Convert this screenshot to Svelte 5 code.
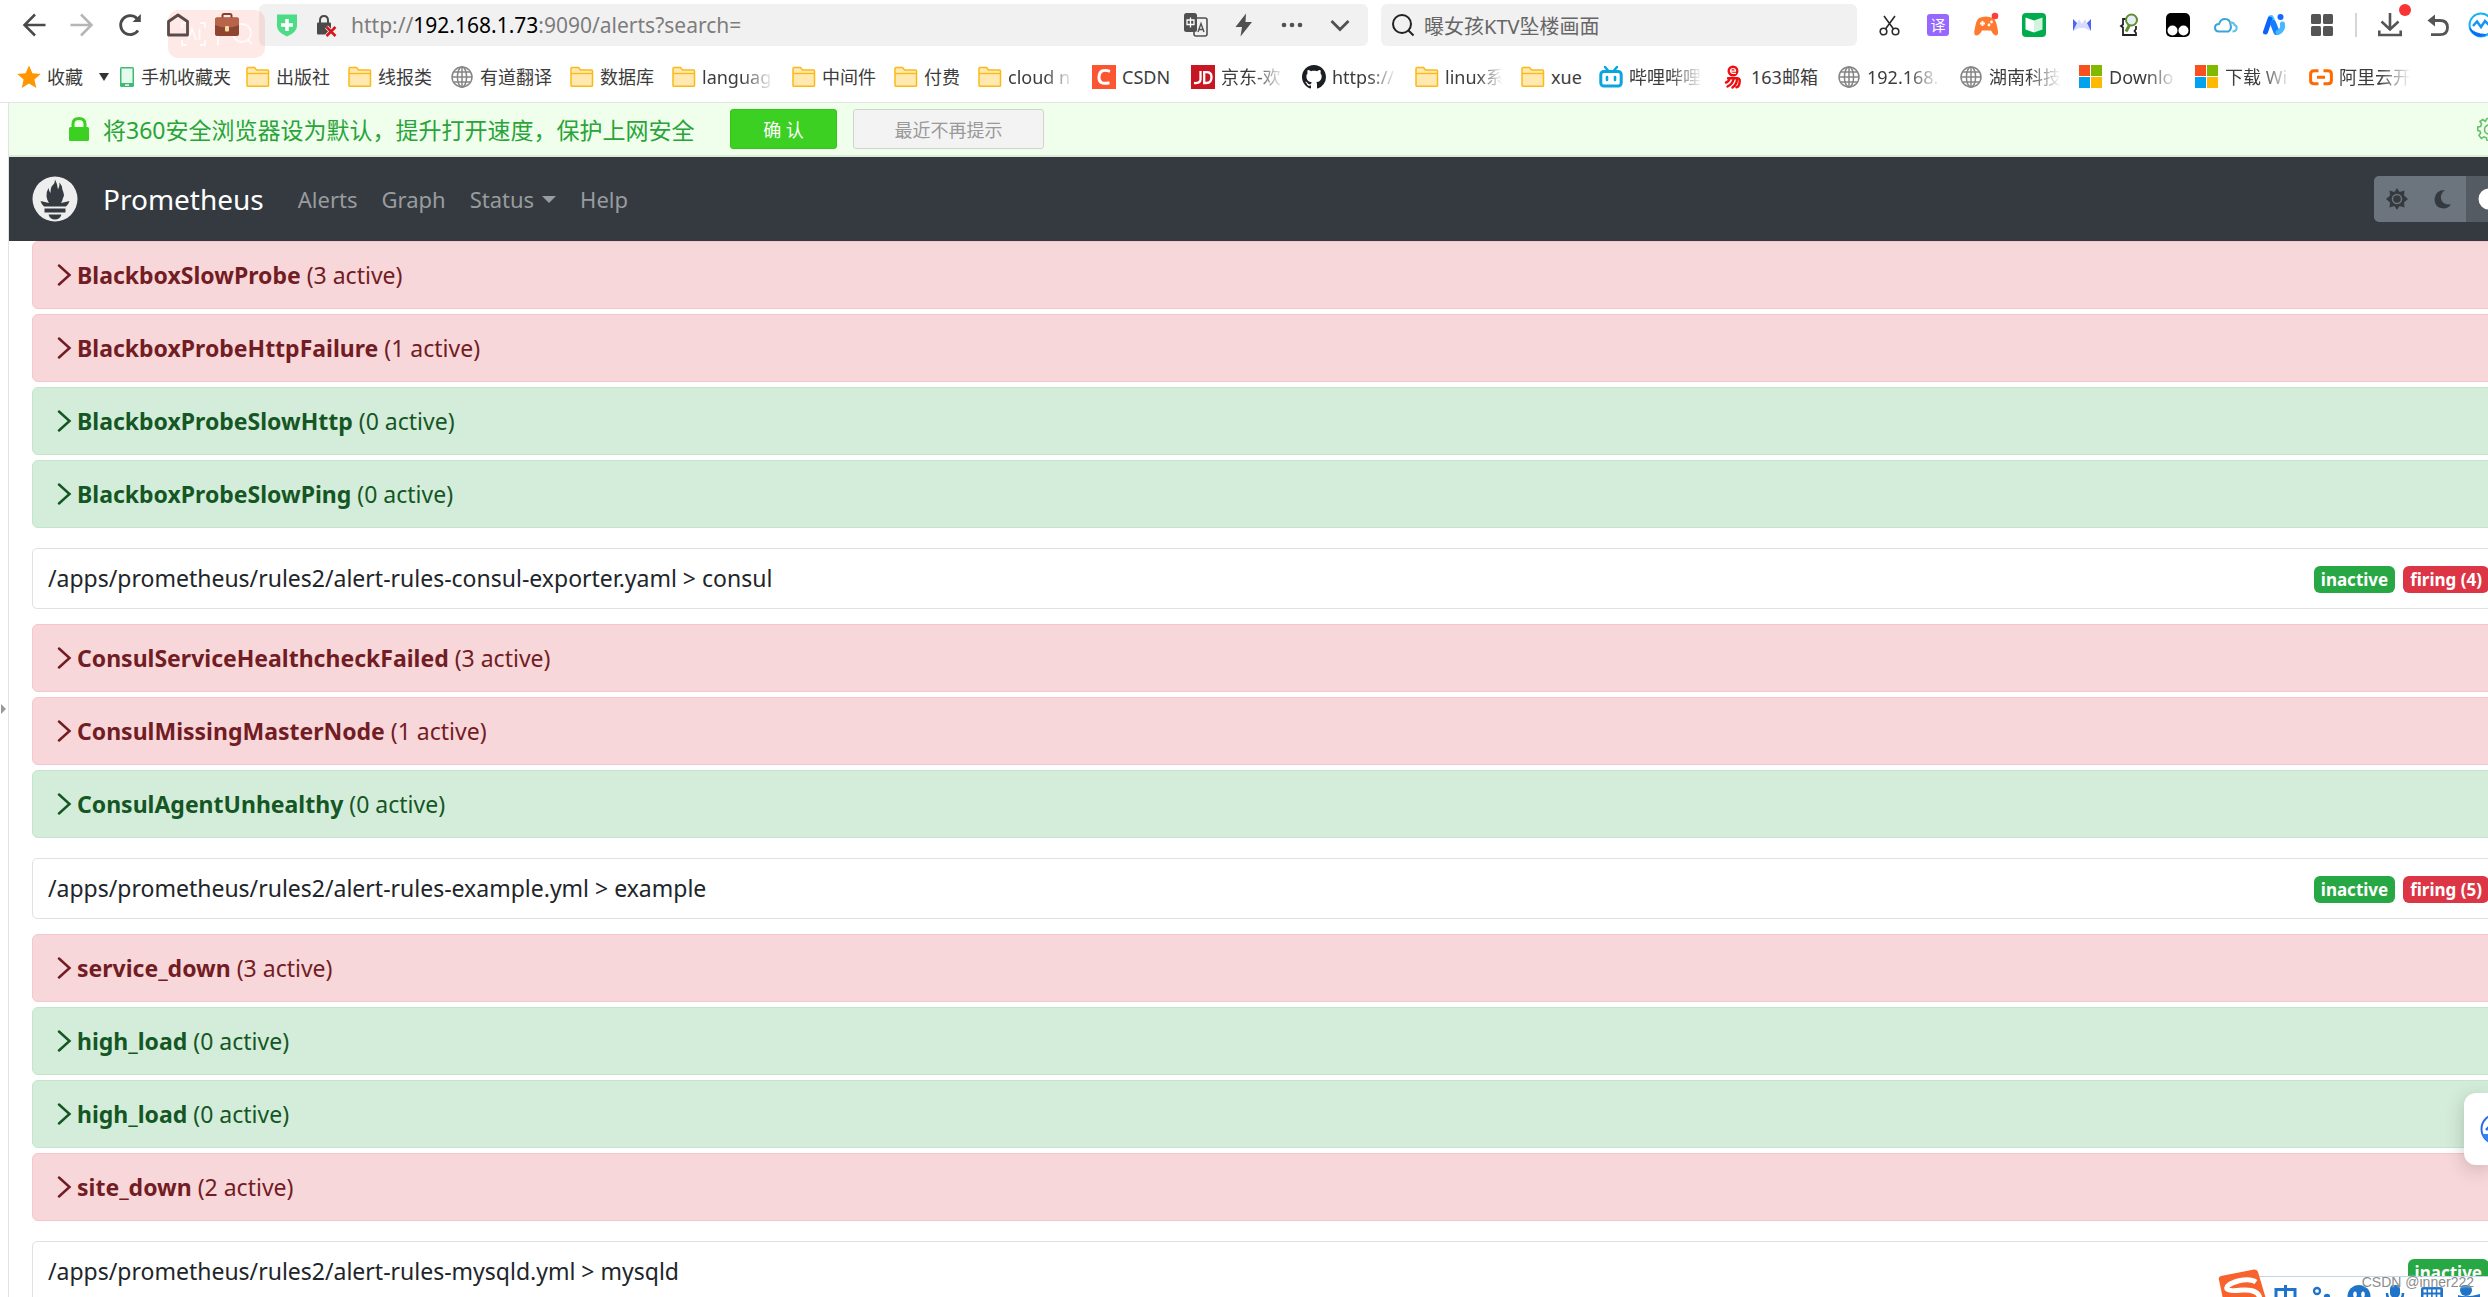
<script>
  const bookmarks = [
    { icon: 'phone', label: '手机收藏夹', w: 87 },
    { icon: 'folder', label: '出版社', w: 54 },
    { icon: 'folder', label: '线报类', w: 54 },
    { icon: 'globe', label: '有道翻译', w: 72 },
    { icon: 'folder', label: '数据库', w: 54 },
    { icon: 'folder', label: 'languag', w: 72, fade: true },
    { icon: 'folder', label: '中间件', w: 54 },
    { icon: 'folder', label: '付费', w: 36 },
    { icon: 'folder', label: 'cloud n', w: 66, fade: true },
    { icon: 'csdn', label: 'CSDN', w: 51 },
    { icon: 'jd', label: '京东-欢', w: 63, fade: true },
    { icon: 'github', label: 'https://', w: 65, fade: true },
    { icon: 'folder', label: 'linux系', w: 58, fade: true },
    { icon: 'folder', label: 'xue', w: 30 },
    { icon: 'bili', label: '哔哩哔哩', w: 74, fade: true },
    { icon: 'netease', label: '163邮箱', w: 68 },
    { icon: 'globe', label: '192.168.', w: 74, fade: true },
    { icon: 'globe', label: '湖南科技', w: 72, fade: true },
    { icon: 'ms', label: 'Downlo', w: 68, fade: true },
    { icon: 'ms', label: '下载 Wi', w: 66, fade: true },
    { icon: 'aliyun', label: '阿里云开', w: 72, fade: true }
  ];

  const extensions = ['scissors', 'translate', 'gamepad', 'book', 'bow', 'lens', 'monkey', 'cloud', 'ai', 'grid'];

  const groups = [
    {
      file: null,
      alerts: [
        { name: 'BlackboxSlowProbe', n: 3 },
        { name: 'BlackboxProbeHttpFailure', n: 1 },
        { name: 'BlackboxProbeSlowHttp', n: 0 },
        { name: 'BlackboxProbeSlowPing', n: 0 }
      ]
    },
    {
      file: '/apps/prometheus/rules2/alert-rules-consul-exporter.yaml > consul',
      firing: 4,
      alerts: [
        { name: 'ConsulServiceHealthcheckFailed', n: 3 },
        { name: 'ConsulMissingMasterNode', n: 1 },
        { name: 'ConsulAgentUnhealthy', n: 0 }
      ]
    },
    {
      file: '/apps/prometheus/rules2/alert-rules-example.yml > example',
      firing: 5,
      alerts: [
        { name: 'service_down', n: 3 },
        { name: 'high_load', n: 0 },
        { name: 'high_load', n: 0 },
        { name: 'site_down', n: 2 }
      ]
    },
    { file: '/apps/prometheus/rules2/alert-rules-mysqld.yml > mysqld', firing: 0, alerts: [] }
  ];
</script>

{#snippet bookmarkIcon(kind)}
  {#if kind === 'phone'}
    <svg class="phone" width="16" height="24" viewBox="0 0 16 24"><rect x="1" y="2" width="14" height="20" rx="1.5" fill="#3dbb72" /><rect x="2.5" y="3.5" width="11" height="14.5" fill="#e4fbee" /><rect x="6" y="19.4" width="4" height="1.4" fill="#fff" /></svg>
  {:else if kind === 'folder'}
    <svg width="24" height="24" viewBox="0 0 24 24"><path d="M1 3.5Q1 2.5 2 2.5H8.500L10.500 5H21.500Q22.500 5 22.500 6V20.500Q22.500 21.300 21.500 21.300H2Q1 21.300 1 20.500Z" fill="#ffe9b0" stroke="#fbb917" stroke-width="1.5" /><path d="M1 8.500H22.500" stroke="#fbb917" stroke-width="1.3" /></svg>
  {:else if kind === 'globe'}
    <svg width="24" height="24" viewBox="0 0 24 24" fill="none" stroke="#858585" stroke-width="1.5"><circle cx="12" cy="12" r="10" /><ellipse cx="12" cy="12" rx="4.600" ry="10" /><path d="M2 12H22M12 2V22M3.800 7H20.200M3.800 17H20.200" /></svg>
  {:else if kind === 'csdn'}
    <svg width="24" height="24" viewBox="0 0 24 24"><rect width="24" height="24" fill="#fc5531" /><path d="M18 6.300Q8 3 7 11.500Q6.300 20.500 17.500 17.700" fill="none" stroke="#fff" stroke-width="3" /></svg>
  {:else if kind === 'jd'}
    <svg width="24" height="24" viewBox="0 0 24 24" fill="none" stroke="#fff" stroke-width="2.300"><rect width="24" height="24" fill="#c91623" stroke="none" /><path d="M9.500 6V14.500Q9.500 18.500 3 18" /><path d="M13.200 7.200H15.500Q20.500 7.200 20.500 12Q20.500 18 15.500 18H13.200Z" /></svg>
  {:else if kind === 'github'}
    <svg width="24" height="24" viewBox="0 0 16 16"><path fill="#1b1f23" d="M8 0C3.580 0 0 3.580 0 8c0 3.540 2.290 6.530 5.470 7.590.4.070.55-.17.55-.38 0-.19-.01-.82-.01-1.490-2.010.37-2.530-.49-2.690-.94-.09-.23-.48-.94-.82-1.130-.28-.15-.68-.52-.01-.53.63-.01 1.080.58 1.230.82.72 1.210 1.870.87 2.330.66.07-.52.28-.87.51-1.070-1.780-.2-3.640-.89-3.640-3.950 0-.87.31-1.590.82-2.150-.08-.2-.36-1.020.08-2.120 0 0 .67-.21 2.200.82.64-.18 1.320-.27 2-.27s1.360.09 2 .27c1.530-1.040 2.200-.82 2.200-.82.44 1.100.16 1.920.08 2.120.51.56.82 1.270.82 2.150 0 3.070-1.870 3.750-3.650 3.950.29.25.54.73.54 1.480 0 1.070-.01 1.930-.01 2.200 0 .21.15.46.55.38A8.010 8.010 0 0 0 16 8c0-4.420-3.580-8-8-8z" /></svg>
  {:else if kind === 'bili'}
    <svg width="24" height="24" viewBox="0 0 24 24" fill="none" stroke="#0aa5e0" stroke-width="3" stroke-linecap="round"><rect x="1.800" y="6.500" width="20.400" height="14.500" rx="3" /><path d="M6 2L9 5.500M18 2L15 5.500" stroke-width="2.500" /><path d="M8 12V15M16 12V15" stroke-width="2.600" /></svg>
  {:else if kind === 'netease'}
    <svg width="24" height="24" viewBox="0 0 24 24" fill="none" stroke="#ee1010" stroke-width="2.400" stroke-linecap="round"><circle cx="12" cy="6" r="5.500" fill="#ee1010" stroke="none" /><path d="M9.500 6.200H14.500Q14.500 3.500 12 3.500Q9.500 3.500 9.500 6.200Q9.800 9 14.500 8.300" stroke="#fff" stroke-width="1.200" /><path d="M7 13.200H16.500Q19.500 13.200 18.500 18Q18 22 15.500 22.300M8.500 13.500Q8 16.500 5 17.500M12.500 14.500Q11.500 19 6.500 21.500M16 15Q15.500 19.500 11.500 22.500" /></svg>
  {:else if kind === 'ms'}
    <svg width="24" height="24" viewBox="0 0 24 24"><path fill="#f8501f" d="M0 0h11v11H0z" /><path fill="#80b900" d="M12 0h11v11H12z" /><path fill="#02a3ee" d="M0 12h11v11H0z" /><path fill="#ffb901" d="M12 12h11v11H12z" /></svg>
  {:else if kind === 'aliyun'}
    <svg width="24" height="24" viewBox="0 0 24 24" fill="none" stroke="#ff6a00" stroke-width="3"><path d="M9.500 5.800H5Q1.600 5.800 1.600 9V15.500Q1.600 18.700 5 18.700H9.500M14.500 5.800H19Q22.400 5.800 22.400 9V15.500Q22.400 18.700 19 18.700H14.500M8 12.300H16" /></svg>
  {/if}
{/snippet}

{#snippet extensionIcon(kind)}
  {#if kind === 'scissors'}
    <svg width="24" height="24" viewBox="0 0 24 24" fill="none" stroke="#2b2b2b" stroke-width="1.600"><circle cx="5.500" cy="18.500" r="3.300" /><circle cx="17.500" cy="18.500" r="3.300" /><path d="M6 3L15.500 16M17 3L7.500 16" /></svg>
  {:else if kind === 'translate'}
    <span class="yi">译</span>
  {:else if kind === 'gamepad'}
    <svg width="26" height="26" viewBox="0 0 26 26"><path d="M6 6Q13 3 20 6Q23 7 25 19Q25.500 23.500 22.500 23.500Q19.500 22 18 18.500H9Q6.500 23.500 3 23.500Q.5 23 1.500 18Q3.500 7 6 6Z" fill="#ff7a2e" /><path d="M7 11.500H12M9.500 9V14" stroke="#fff" stroke-width="1.800" /><circle cx="18.500" cy="10" r="1.400" fill="#fff" /><circle cx="16" cy="13" r="1.400" fill="#fff" /><circle cx="22" cy="4" r="3.300" fill="#ff3b3b" /></svg>
  {:else if kind === 'book'}
    <svg width="24" height="24" viewBox="0 0 24 24"><rect width="24" height="24" rx="4" fill="#00ad4c" /><path d="M3.500 4.500L12 7.500V19.500L3.500 16.500Z" fill="#fff" /><path d="M20.500 4.500L12 7.500V19.500L20.500 16.500Z" fill="#d3f3df" /></svg>
  {:else if kind === 'bow'}
    <svg width="24" height="24" viewBox="0 0 24 24"><path d="M3 18V6L9 12Z" fill="#4f63f4" /><path d="M21 18V6L15 12Z" fill="#4f63f4" /><path d="M3 18L9 6L12 11L15 6L21 18L14.500 15H9.500Z" fill="#d7dcff" /></svg>
  {:else if kind === 'lens'}
    <svg width="24" height="24" viewBox="0 0 24 24" fill="none"><path d="M8 6H5V11.500L3 13L5 14.500V22H18V20L16.500 18L18 16V13" stroke="#222" stroke-width="1.800" /><circle cx="13.500" cy="7" r="5.500" fill="#e3edf7" stroke="#5f8f2d" stroke-width="2" /><path d="M11.500 12L8 18.500" stroke="#5f8f2d" stroke-width="3" /></svg>
  {:else if kind === 'monkey'}
    <svg width="24" height="24" viewBox="0 0 24 24"><rect width="24" height="24" rx="5" fill="#000" /><circle cx="6.500" cy="17.500" r="5" fill="#fff" /><circle cx="17.500" cy="17.500" r="5" fill="#fff" /></svg>
  {:else if kind === 'cloud'}
    <svg width="26" height="24" viewBox="0 0 26 24" fill="none" stroke-width="2"><path d="M6 18.500Q2 18.500 2 14.500Q2 11 6 11Q7.500 6 12 6Q17 6 17.500 11.500Q19 16 15.500 18.500Z" stroke="#3aa6d8" /><path d="M17 9.500Q21 9 21.500 12Q24.500 13 23.500 16Q22.800 18.500 19.500 18.500" stroke="#5cc4ea" /></svg>
  {:else if kind === 'ai'}
    <svg width="26" height="24" viewBox="0 0 26 24" fill="none" stroke-width="6" stroke-linecap="round"><path d="M10 5L15.500 19" stroke="#3bd0f6" /><path d="M9 6L4.500 19" stroke="#0d62fe" stroke-width="5" /><path d="M12 10L15.500 19" stroke="#167dff" /><path d="M21.500 11Q22.500 17 17 19.500" stroke="#45b8ff" stroke-width="5" /><circle cx="19.500" cy="4" r="3" fill="#1268ff" /></svg>
  {:else if kind === 'grid'}
    <svg width="24" height="24" viewBox="0 0 24 24" fill="#555"><rect x="1" y="1" width="10" height="10" rx="1.500" /><rect x="13" y="1" width="10" height="10" rx="1.500" /><rect x="1" y="13" width="10" height="10" rx="1.500" /><rect x="13" y="13" width="10" height="10" rx="1.500" /></svg>
  {/if}
{/snippet}

<div class="browser">
  <div class="toolbar">
    <div class="nav-buttons">
      <button aria-label="Back"><svg width="24" height="24" viewBox="0 0 24 24" fill="none" stroke="#4a4a4a" stroke-width="2.500"><path d="M13 1.500L2.500 12L13 22.500M2.500 12H23.500" /></svg></button>
      <button aria-label="Forward"><svg width="24" height="24" viewBox="0 0 24 24" fill="none" stroke="#b5b5b5" stroke-width="2.500"><path d="M11 1.500L21.500 12L11 22.500M21.500 12H.5" /></svg></button>
      <button aria-label="Reload"><svg width="24" height="24" viewBox="0 0 24 24" fill="none" stroke="#4a4a4a" stroke-width="2.800"><path d="M20 17.500A9.500 9.500 0 1 1 19 5.500" /><path d="M22.800 1V9H14.500Z" fill="#4a4a4a" stroke="none" /></svg></button>
      <button aria-label="Home"><svg width="24" height="24" viewBox="0 0 24 24" fill="none" stroke="#5a4a4c" stroke-width="2.800" stroke-linejoin="round"><path d="M2.500 8.500L12 2L21.500 8.500V22H2.500Z" /></svg></button>
      <button aria-label="Toolbox"><svg width="26" height="24" viewBox="0 0 26 24"><path d="M8.500 5V2.500Q8.500 1 10 1H16Q17.500 1 17.500 2.500V5" fill="none" stroke="#8a3f2b" stroke-width="2" /><rect x="1" y="4.500" width="24" height="18.500" rx="2" fill="#8f4430" /><path d="M1 6.500Q1 4.500 3 4.500H23Q25 4.500 25 6.500V12Q19 14.500 13 14.500Q7 14.500 1 12Z" fill="#b7644a" /><rect x="11" y="13" width="4" height="5.500" rx="1" fill="#f6d9a0" /></svg></button>
    </div>
    <div class="address">
      <svg width="24" height="24" viewBox="0 0 24 24"><path d="M2 1.500H22V13Q22 19 12 23.500Q2 19 2 13Z" fill="#4ddc86" /><path d="M12 6V18M6 12H18" stroke="#fff" stroke-width="3.500" /></svg>
      <svg class="insecure" width="22" height="24" viewBox="0 0 22 24"><path d="M4 11V7.500Q4 3 8 3Q12 3 12 7.500V11" fill="none" stroke="#4a4a4a" stroke-width="2" /><rect x="1" y="9.500" width="14" height="12" rx="1" fill="#4a4a4a" /><path d="M10.500 14L19.500 23M19.500 14L10.500 23" stroke="#f1f1f1" stroke-width="4" /><path d="M10.500 14L19.500 23M19.500 14L10.500 23" stroke="#d9151c" stroke-width="2.500" /></svg>
      <span class="url">http://<b>192.168.1.73</b>:9090/alerts?search=</span>
      <div class="address-tools">
        <button aria-label="Translate page"><svg width="24" height="24" viewBox="0 0 24 24"><rect x="10" y="5" width="13" height="18" rx="2" fill="none" stroke="#505050" stroke-width="1.600" /><rect width="13" height="19" rx="2.500" fill="#505050" /><path d="M3 7H10V11.500H3ZM6.500 4.500V14.500" fill="none" stroke="#fff" stroke-width="1.300" /><path d="M14 19L17 10.500L20 19M15 16.500H19" fill="none" stroke="#505050" stroke-width="1.400" /></svg></button>
        <button aria-label="Speed mode"><svg width="24" height="24" viewBox="0 0 24 24"><path d="M14 .5L3.500 14H10L8.500 23.500L20 9H13.500Z" fill="#505050" /></svg></button>
        <button aria-label="More"><svg width="24" height="24" viewBox="0 0 24 24" fill="#505050"><circle cx="4" cy="12" r="2.300" /><circle cx="12" cy="12" r="2.300" /><circle cx="20" cy="12" r="2.300" /></svg></button>
        <button aria-label="History"><svg width="24" height="24" viewBox="0 0 24 24" fill="none" stroke="#505050" stroke-width="2.800"><path d="M3.500 8L12 16.500L20.500 8" /></svg></button>
      </div>
    </div>
    <label class="search">
      <svg width="24" height="24" viewBox="0 0 24 24" fill="none" stroke="#222" stroke-width="2"><circle cx="11" cy="11" r="9" /><path d="M17.500 17.500L22.500 22.500" /></svg>
      <input type="text" aria-label="Search" value="曝女孩KTV坠楼画面" />
    </label>
    <div class="extensions">
      {#each extensions as kind}
        <button aria-label={kind}>{@render extensionIcon(kind)}</button>
      {/each}
      <span class="separator"></span>
      <button class="download" aria-label="Downloads"><svg width="24" height="24" viewBox="0 0 24 24" fill="none" stroke="#555" stroke-width="2.600"><path d="M12 0V16M3.500 8.500L12 16.500L20.500 8.500M1.300 17.500V22H22.700V17.500" /></svg><i></i></button>
      <button aria-label="Undo"><svg width="24" height="24" viewBox="0 0 24 24" fill="none" stroke="#555" stroke-width="2.800"><path d="M6 7.500H14Q21.500 7.500 21.500 14.500Q21.500 21.700 14 21.700H5" /><path d="M9 1.500V13.500L1.500 7.500Z" fill="#555" stroke="none" /></svg></button>
      <button class="assistant" aria-label="Assistant"><svg width="26" height="26" viewBox="0 0 26 26" fill="none"><circle cx="13" cy="13" r="11.500" stroke="#12b4f7" stroke-width="2" /><path d="M2 16Q6 22 18 22.500Q14 25 10 24A12 12 0 0 1 2 16Z" fill="#0a6cf5" stroke="#0a6cf5" stroke-width="1" /><path d="M5 14L9 9.500L13 15L17 9L22 14" stroke="#1595f5" stroke-width="2.500" /></svg></button>
    </div>
    <div class="capture">
      <svg width="72" height="24" viewBox="0 0 72 24" fill="none" stroke="#fff" stroke-opacity="0.8" stroke-width="1.800"><path d="M6 1H1V6M19 1H24V6M6 23H1V18M19 23H24V18M7 18L11 7L15 18M18.500 7V18M37 1V23" /><circle cx="61" cy="11" r="9" /><path d="M67 18L71 22" /></svg>
    </div>
  </div>

  <nav class="bookmarks" aria-label="Bookmarks">
    <a class="favourites" href="#favourites">
      <svg width="24" height="24" viewBox="0 0 24 24"><path d="M12 .5L15.400 8.300L23.700 9L17.400 14.600L19.300 23L12 18.600L4.700 23L6.600 14.600L.3 9L8.600 8.300Z" fill="#ff9500" /></svg>
      <span>收藏</span>
      <svg class="caret-down" width="10" height="8" viewBox="0 0 10 8"><path d="M0 0H10L5 8Z" fill="#333" /></svg>
    </a>
    {#each bookmarks as b}
      <a href="#bookmark">
        {@render bookmarkIcon(b.icon)}
        <span class:fade={b.fade} style:width="{b.w}px">{b.label}</span>
      </a>
    {/each}
  </nav>

  <div class="viewport">
    <div class="gutter">
      <svg width="6" height="10" viewBox="0 0 6 10"><path d="M1 0L6 5L1 10Z" fill="#999" /></svg>
    </div>
    <main>
      <div class="notice">
        <svg width="22" height="26" viewBox="0 0 22 26"><path d="M5 12V8Q5 2.500 11 2.500Q17 2.500 17 8V12" fill="none" stroke="#3bd022" stroke-width="3" /><rect x="1" y="11" width="20" height="14" rx="1.500" fill="#3bd022" /></svg>
        <span>将360安全浏览器设为默认，提升打开速度，保护上网安全</span>
        <button class="confirm">确 认</button>
        <button class="dismiss">最近不再提示</button>
        <svg class="gear" width="24" height="24" viewBox="0 0 24 24" fill="none" stroke="#66bf6b" stroke-width="1.600"><path d="M10 1.500H14L14.600 4.600L17 5.600L19.600 3.800L22 6.500L20.300 9L21 11H23V14.500L20.300 15L19.300 17.400L21 20L18 22L15.500 20.300L14 21V23.500H10L9.400 20.800L7 19.800L4.400 21.500L2 18.500L3.700 16L2.800 14L.8 13.500V10L3.500 9.500L4.600 7L3 4.500L5.800 2.500L8.300 4.400Z" /><circle cx="12" cy="12.500" r="4.500" /></svg>
      </div>

      <nav class="navbar" aria-label="Prometheus">
        <a class="brand" href="#home">
          <svg width="46" height="46" viewBox="0 0 46 46"><circle cx="23" cy="23" r="22.500" fill="#eee" /><g fill="#343a40"><path d="M23 3.500Q25.500 8 26 13.500Q28 10 27.500 6.500Q30 9 30.500 14Q33 19 31 22Q30.500 24.500 29 27L37.500 25Q36.500 28.500 34 30.500H12Q9.500 28.500 8.500 25L17 27Q15 24 14.500 20.500Q14 16 16.500 12Q17 15.500 18.500 17Q18.500 10.500 21 9Q23 7 23 3.500Z" /><path d="M12.500 32.500H33.500V36.500H12.500Z" /><path d="M16.500 38.500H29.500Q28 43.500 23 43.500Q18 43.500 16.500 38.500Z" /></g></svg>
          <span>Prometheus</span>
        </a>
        <a href="#alerts">Alerts</a>
        <a href="#graph">Graph</a>
        <a class="dropdown" href="#status">Status<i></i></a>
        <a href="#help">Help</a>
        <div class="themes">
          <button aria-label="Light theme"><svg width="24" height="24" viewBox="0 0 24 24"><path d="M12 1L14.500 5L19.500 3.500L19 8.500L23 12L19 15.500L19.500 20.500L14.500 19L12 23L9.500 19L4.500 20.500L5 15.500L1 12L5 8.500L4.500 3.500L9.500 5Z" fill="#343a40" /><circle cx="12" cy="12" r="4.500" fill="#343a40" stroke="#6c757d" stroke-width="1.500" /></svg></button>
          <button aria-label="Dark theme"><svg width="24" height="24" viewBox="0 0 24 24"><path d="M14 3Q9.500 6 10 11.500Q11 18 20 17.500Q17 21.500 12.500 21.500Q3.500 21 3.500 12Q4.500 3 14 3Z" fill="#343a40" /></svg></button>
          <button class="active" aria-label="System theme"><svg width="24" height="24" viewBox="0 0 24 24"><circle cx="12" cy="12" r="9.500" fill="none" stroke="#fff" stroke-width="2" /><path d="M12 2.500A9.500 9.500 0 0 0 12 21.500Z" fill="#fff" /></svg></button>
        </div>
      </nav>

      <div class="groups">
        {#each groups as g}
          <section>
            {#if g.file}
              <div class="group-head">
                <span>{g.file}</span>
                <span class="badges">
                  <span class="badge ok">inactive</span>
                  {#if g.firing}<span class="badge bad">firing ({g.firing})</span>{/if}
                </span>
              </div>
            {/if}
            {#each g.alerts as a}
              <button class="alert" class:firing={a.n > 0}>
                <svg width="15" height="22" viewBox="0 0 15 22" fill="none" stroke="currentColor" stroke-width="2.500" stroke-linecap="round"><path d="M2 1.500L12.500 11L2 20.500" /></svg>
                <span><strong>{a.name}</strong> ({a.n} active)</span>
              </button>
            {/each}
          </section>
        {/each}
      </div>
    </main>
  </div>

  <button class="floating" aria-label="Open assistant">
    <svg width="32" height="32" viewBox="0 0 32 32" fill="none"><circle cx="16" cy="16" r="14.500" stroke="#2b6de8" stroke-width="2" /><path d="M2 21H30Q26 30.500 16 30.500Q6 30.500 2 21Z" fill="#3b82f6" /><path d="M6 17L10 13L14 17" stroke="#2b6de8" stroke-width="2.500" /></svg>
  </button>

  <div class="ime">
    <svg class="ime-logo" width="48" height="30" viewBox="0 0 48 30"><path d="M1 11Q0 8 3 7L36 .5Q39 0 40 3L48 30H5Z" fill="#f8622c" /><path d="M38 13Q32 9 20 12Q7 16 9 20Q11 22.500 24 21Q41 20 42 30" fill="none" stroke="#fff" stroke-width="5" /></svg>
    <div class="ime-bar">
      <svg width="24" height="20" viewBox="0 0 24 20" fill="none" stroke="#1f74c9" stroke-width="3"><path d="M2 16V4.500H21V16M2 14H21M11.500 0V20" /></svg>
      <svg width="24" height="20" viewBox="0 0 24 20" fill="none" stroke="#1f74c9" stroke-width="2.300"><circle cx="7" cy="6" r="3" /><circle cx="17" cy="12" r="2" fill="#1f74c9" /></svg>
      <svg width="24" height="20" viewBox="0 0 24 20"><circle cx="12" cy="11.500" r="11.500" fill="#1f74c9" /><ellipse cx="8" cy="9.500" rx="1.800" ry="3" fill="#fff" /><ellipse cx="16" cy="9.500" rx="1.800" ry="3" fill="#fff" /></svg>
      <svg width="24" height="20" viewBox="0 0 24 20"><rect x="7" y="-1" width="10" height="14" rx="5" fill="#1f74c9" /><path d="M4 8Q4 16 12 16Q20 16 20 8" fill="none" stroke="#1f74c9" stroke-width="2.500" /></svg>
      <svg width="24" height="20" viewBox="0 0 24 20"><rect x="1" y="2" width="22" height="20" rx="2" fill="#1f74c9" /><path d="M3.500 6H20.500M3.500 11H20.500M3.500 16H20.500" stroke="#fff" stroke-width="3" stroke-dasharray="3 1.600" /></svg>
      <svg width="24" height="20" viewBox="0 0 24 20" fill="#1f74c9"><circle cx="10" cy="5" r="6" /><path d="M2 10Q10 13 24 9V12Q14 12 15 20H5Q8 14 2 12Z" /></svg>
    </div>
  </div>
  <span class="watermark">CSDN @inner222</span>
</div>

<style>
  :global(body) {
    overflow: hidden;
    background: #fff;
  }
  .browser {
    position: relative;
    display: flex;
    flex-direction: column;
    height: 100vh;
    overflow: hidden;
    font-family: "Noto Sans", "Noto Sans CJK SC", sans-serif;
    color: #212529;
  }
  button {
    padding: 0;
    border: 0;
    background: none;
    font: inherit;
    color: inherit;
    cursor: pointer;
  }
  a {
    color: inherit;
    text-decoration: none;
  }
  svg {
    display: block;
    flex: none;
  }

  .toolbar {
    position: relative;
    display: flex;
    flex: none;
    align-items: center;
    height: 50px;
    padding-left: 22px;
  }
  .nav-buttons {
    position: relative;
    z-index: 1;
    display: flex;
    flex: none;
    gap: 24px;
    width: 237px;
  }
  .capture {
    position: absolute;
    left: 168px;
    top: 10px;
    display: flex;
    align-items: center;
    justify-content: center;
    width: 97px;
    height: 48px;
    border-radius: 10px;
    background: rgba(255, 70, 60, 0.12);
    pointer-events: none;
  }
  .address {
    display: flex;
    flex: 1;
    align-items: center;
    height: 42px;
    padding: 0 16px;
    border-radius: 6px;
    background: #f1f1f1;
  }
  .insecure {
    margin: 0 13px 0 17px;
  }
  .url {
    flex: 1;
    font-size: 21px;
    color: #7d7d7d;
  }
  .url b {
    font-weight: 400;
    color: #000;
  }
  .address-tools {
    display: flex;
    gap: 24px;
  }
  .search {
    display: flex;
    flex: none;
    align-items: center;
    gap: 9px;
    width: 476px;
    height: 42px;
    margin-left: 13px;
    padding-left: 10px;
    border-radius: 6px;
    background: #f1f1f1;
    box-sizing: border-box;
  }
  .search input {
    flex: 1;
    min-width: 0;
    padding: 0;
    border: 0;
    outline: 0;
    background: none;
    font: inherit;
    font-size: 20px;
    color: #666;
  }
  .extensions {
    display: flex;
    flex: none;
    align-items: center;
    width: 631px;
    padding-left: 9px;
    box-sizing: border-box;
  }
  .extensions button {
    position: relative;
    display: flex;
    flex: none;
    align-items: center;
    justify-content: center;
    width: 48px;
    height: 32px;
  }
  .yi {
    width: 22px;
    height: 22px;
    border-radius: 3px;
    background: #9668ff;
    font-size: 15px;
    line-height: 22px;
    color: #fff;
  }
  .separator {
    flex: none;
    width: 2px;
    height: 24px;
    margin: 0 9px;
    background: #d6d6d6;
  }
  .download i {
    position: absolute;
    top: -5px;
    right: 3px;
    width: 12px;
    height: 12px;
    border-radius: 50%;
    background: #f93434;
  }
  .extensions .assistant {
    width: 38px;
  }

  .bookmarks {
    display: flex;
    flex: none;
    gap: 18px;
    height: 53px;
    padding: 2px 0 0 17px;
    border-bottom: 1px solid #e4e4e4;
    box-sizing: border-box;
    font-size: 18px;
    line-height: 24px;
    color: #3c3c3c;
    white-space: nowrap;
  }
  .bookmarks a {
    display: flex;
    flex: none;
    align-items: center;
    gap: 6px;
  }
  .bookmarks .favourites {
    width: 84px;
  }
  .favourites .caret-down {
    margin-left: 10px;
  }
  .fade {
    overflow: hidden;
    mask-image: linear-gradient(to right, #000 55%, transparent 100%);
  }

  .viewport {
    display: flex;
    flex: 1;
    min-height: 0;
  }
  .gutter {
    display: flex;
    flex: none;
    align-items: center;
    width: 8px;
    padding-top: 18px;
    border-right: 1px solid #e2e2e2;
  }
  main {
    flex: 1;
    min-width: 0;
  }
  .notice {
    display: flex;
    align-items: center;
    height: 52px;
    padding-left: 59px;
    border-bottom: 2px solid #d8efd5;
    overflow: hidden;
    background: #efffeb;
    white-space: nowrap;
  }
  .notice span {
    width: 614px;
    margin-left: 13px;
    font-size: 23px;
    color: #29a33a;
  }
  .notice button {
    flex: none;
    height: 40px;
    border-radius: 3px;
    box-sizing: border-box;
    font-size: 18px;
  }
  .notice .confirm {
    width: 107px;
    margin: 0 16px 0 13px;
    border: 1px solid #35c31c;
    background: #3bd022;
    color: #fff;
  }
  .notice .dismiss {
    width: 191px;
    border: 1px solid #d2d2d2;
    background: #f3f3f3;
    color: #999;
  }
  .gear {
    margin: 0 -13px 0 auto;
  }

  .navbar {
    display: flex;
    align-items: center;
    gap: 24px;
    height: 84px;
    padding-left: 23px;
    overflow: hidden;
    background: #343a40;
    font-size: 22px;
    line-height: 36px;
    color: #999c9f;
  }
  .brand {
    display: flex;
    align-items: center;
    gap: 25px;
    margin-right: 10px;
    font-size: 28px;
    color: #fff;
  }
  .dropdown {
    display: flex;
    align-items: center;
    gap: 8px;
  }
  .dropdown i {
    border: 7px solid transparent;
    border-top-color: currentColor;
    border-bottom: 0;
  }
  .themes {
    display: flex;
    flex: none;
    margin: 0 -24px 0 auto;
    border-radius: 5px;
    overflow: hidden;
    background: #6c757d;
  }
  .themes button {
    display: flex;
    align-items: center;
    justify-content: center;
    width: 46px;
    height: 46px;
  }
  .themes .active {
    background: #545b62;
  }

  .groups {
    display: flex;
    flex-direction: column;
    gap: 20px;
    margin: 0 -17px 0 23px;
    font-size: 23px;
    line-height: 36px;
  }
  section {
    display: flex;
    flex-direction: column;
    gap: 5px;
  }
  .group-head {
    display: flex;
    align-items: center;
    justify-content: space-between;
    height: 61px;
    margin-bottom: 10px;
    padding: 0 15px 2px;
    border: 1px solid #dee2e6;
    border-radius: 5px;
    box-sizing: border-box;
  }
  .badges {
    display: flex;
    gap: 8px;
    padding-top: 3px;
  }
  .badge {
    padding: 0 7px;
    border-radius: 6px;
    font-size: 17px;
    font-weight: 700;
    line-height: 27px;
    color: #fff;
  }
  .ok {
    background: #28a745;
  }
  .bad {
    background: #dc3545;
  }
  .alert {
    display: flex;
    align-items: center;
    gap: 5px;
    height: 68px;
    padding: 0 24px;
    border: 1px solid #c3e6cb;
    border-radius: 6px;
    box-sizing: border-box;
    background: #d4edda;
    color: #155724;
    text-align: left;
  }
  .alert.firing {
    border-color: #f5c6cb;
    background: #f8d7da;
    color: #721c24;
  }

  .floating {
    position: absolute;
    right: 0;
    bottom: 132px;
    display: flex;
    align-items: center;
    width: 24px;
    height: 72px;
    padding-left: 16px;
    border-radius: 12px 0 0 12px;
    box-sizing: border-box;
    background: #fff;
    box-shadow: 0 4px 20px rgba(0, 0, 0, 0.2);
  }
  .ime {
    position: absolute;
    right: 0;
    bottom: 0;
    display: flex;
    align-items: flex-end;
    width: 270px;
    height: 27px;
  }
  .ime-logo {
    position: relative;
    z-index: 1;
    margin-bottom: -2px;
  }
  .ime-bar {
    display: flex;
    flex: 1;
    align-items: flex-start;
    justify-content: space-between;
    height: 21px;
    margin-left: -8px;
    padding: 8px 8px 0 16px;
    border-top: 1px solid #c0d4ea;
    box-sizing: border-box;
    background: #fff;
    overflow: hidden;
  }
  .watermark {
    position: absolute;
    right: 14px;
    bottom: 6px;
    font-family: "Liberation Sans", sans-serif;
    font-size: 14px;
    line-height: 18px;
    color: #8c8c8c;
    text-shadow: 0 0 2px #fff;
  }
</style>
